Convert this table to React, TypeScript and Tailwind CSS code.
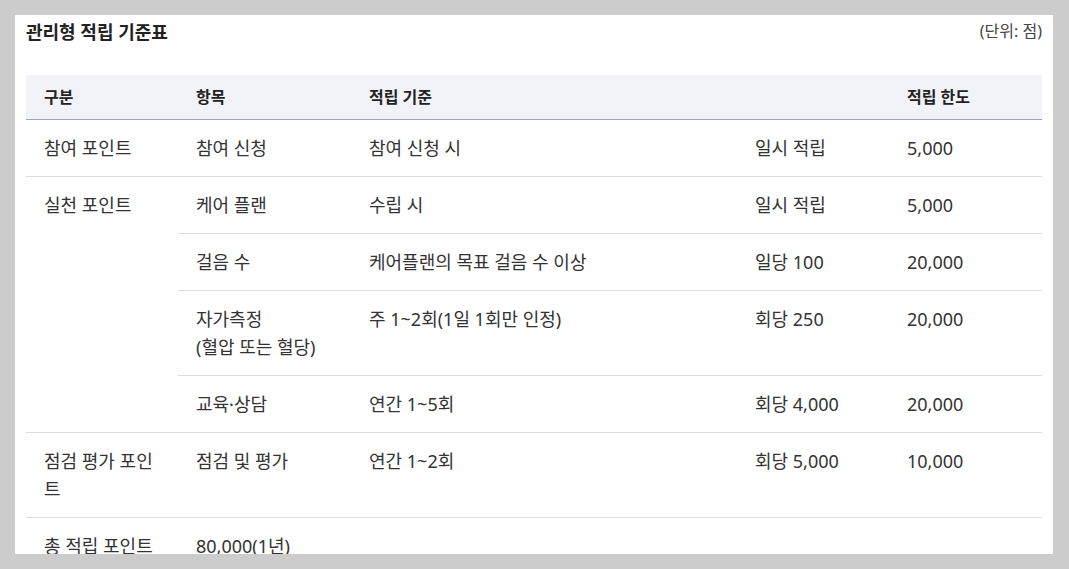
const rows = [
  { cat: "참여 포인트", item: "참여 신청", rule: "참여 신청 시", unit: "일시 적립", limit: "5,000", span: 1 },
  { cat: "실천 포인트", item: "케어 플랜", rule: "수립 시", unit: "일시 적립", limit: "5,000", span: 4 },
  { item: "걸음 수", rule: "케어플랜의 목표 걸음 수 이상", unit: "일당 100", limit: "20,000" },
  { item: "자가측정\n(혈압 또는 혈당)", rule: "주 1~2회(1일 1회만 인정)", unit: "회당 250", limit: "20,000" },
  { item: "교육·상담", rule: "연간 1~5회", unit: "회당 4,000", limit: "20,000" },
  { cat: "점검 평가 포인트", item: "점검 및 평가", rule: "연간 1~2회", unit: "회당 5,000", limit: "10,000", span: 1 },
  { cat: "총 적립 포인트", item: "80,000(1년)", rule: "", unit: "", limit: "", span: 1 },
];

const cell = "px-[18px] pt-[14px] pb-[14px] align-top leading-[28px] whitespace-pre-line";

export default function App() {
  return (
    <div
      className="h-screen bg-[#cccccc] p-[15px] text-[#333]"
      style={{ fontFamily: '"Noto Sans", "Noto Sans CJK KR", sans-serif' }}
    >
      <div className="h-full w-[1038px] overflow-hidden bg-white px-[11px]">
        <div className="flex items-start justify-between">
          <h1 className="text-[18px] font-bold leading-[34px] text-[#222]">관리형 적립 기준표</h1>
          <span className="text-[16px] leading-[32px] text-[#444]">(단위: 점)</span>
        </div>
        <table className="mt-[26px] w-full table-fixed border-collapse text-[18px]">
          <colgroup>
            <col className="w-[152px]" />
            <col className="w-[173px]" />
            <col className="w-[386px]" />
            <col className="w-[152px]" />
            <col />
          </colgroup>
          <thead>
            <tr className="h-[44px] border-b border-[#9da3b8] bg-[#f2f3f8] text-left text-[16px] text-[#222]">
              <th className="px-[18px] font-bold">구분</th>
              <th className="px-[18px] font-bold">항목</th>
              <th className="px-[18px] font-bold" colSpan={2}>적립 기준</th>
              <th className="px-[18px] font-bold">적립 한도</th>
            </tr>
          </thead>
          <tbody>
            {rows.map((r, i) => (
              <tr key={i} className="border-b border-[#dddddd]">
                {r.cat !== undefined && (
                  <td rowSpan={r.span} className={cell + " border-b border-[#dddddd]"}>
                    {r.cat}
                  </td>
                )}
                <td className={cell}>{r.item}</td>
                <td className={cell}>{r.rule}</td>
                <td className={cell}>{r.unit}</td>
                <td className={cell}>{r.limit}</td>
              </tr>
            ))}
          </tbody>
        </table>
      </div>
    </div>
  );
}
